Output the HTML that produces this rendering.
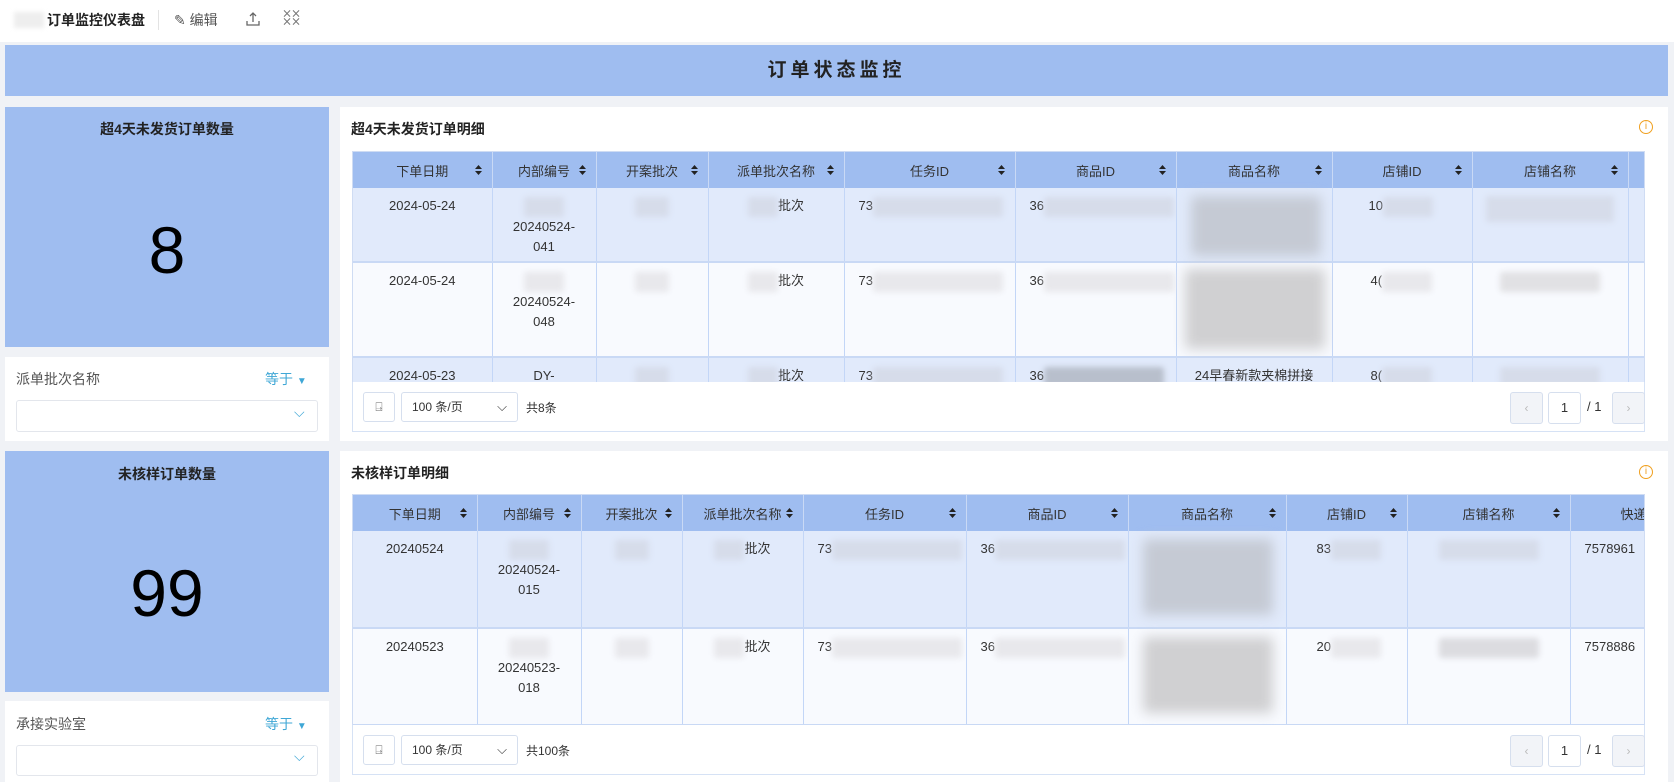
<!DOCTYPE html>
<html><head><meta charset="utf-8"><style>
*{box-sizing:border-box;margin:0;padding:0}
body{width:1674px;height:782px;background:#f0f2f6;font-family:"Liberation Sans","Noto Sans CJK SC",sans-serif;color:#333;position:relative;overflow:hidden}
.a{position:absolute}
.top{left:0;top:0;width:1674px;height:42px;background:#fff}
.card{background:#9fbdf0}
.white{background:#fff}
.tbl{position:absolute;overflow:hidden;border:1px solid #cfdcf3;background:#fff}
table{border-collapse:collapse;table-layout:fixed;font-size:13px}
th{background:#9fbdf0;height:36px;font-weight:normal;color:#333;border-right:1px solid #c9d9f5;position:relative;text-align:center}
th svg{position:absolute;right:10px;top:13px}
td{border-right:1px solid #c3d6f7;border-bottom:2px solid #c9d9f5;vertical-align:top;padding-top:8px;text-align:center;line-height:20px;position:relative}
tr.o td{background:#e1eafb}
tr.e td{background:#f8fafe}
.bl{display:inline-block;height:20px;border-radius:3px;background:#d6dcea;filter:blur(3px);vertical-align:middle}
.img{position:absolute;border-radius:4px;background:#c5cad4;filter:blur(6px)}
.l{text-align:left;padding-left:14px}
.pg{border:1px solid #d6dfee;border-radius:3px;background:#fff;position:absolute;font-size:12px}
</style></head><body>
<div class="a top"></div>
<div class="a" style="left:14px;top:12px;width:30px;height:16px;background:#eee;filter:blur(2px)"></div>
<div class="a" style="left:47px;top:10px;font-size:14px;font-weight:bold;color:#222">订单监控仪表盘</div>
<div class="a" style="left:158px;top:10px;width:1px;height:20px;background:#e3e3e3"></div>
<div class="a" style="left:174px;top:10px;font-size:14px;color:#555">✎ 编辑</div>
<svg class="a" style="left:245px;top:11px" width="16" height="16" viewBox="0 0 16 16"><path d="M8 11V2M5 5l3-3 3 3M2 10v4h12v-4" fill="none" stroke="#666" stroke-width="1.3"/></svg>
<div class="a" style="left:282px;top:9px;font-size:12px;color:#777;line-height:8px;letter-spacing:-1px">⨯⨯<br>⨯⨯</div>
<div class="a card" style="left:5px;top:45px;width:1663px;height:51px;text-align:center;line-height:51px;font-size:19px;font-weight:bold;letter-spacing:4px;color:#222">订单状态监控</div>

<div class="a card" style="left:5px;top:107px;width:324px;height:240px"></div>
<div class="a" style="left:5px;top:119px;width:324px;text-align:center;font-size:14px;font-weight:bold;color:#222">超4天未发货订单数量</div>
<div class="a" style="left:5px;top:212px;width:324px;text-align:center;font-size:66px;color:#000">8</div>
<div class="a white" style="left:5px;top:357px;width:324px;height:84px"></div>
<div class="a" style="left:16px;top:369px;font-size:14px;color:#555">派单批次名称</div>
<div class="a" style="left:265px;top:369px;font-size:14px;color:#3fa7d6">等于 <span style="font-size:10px">▼</span></div>
<div class="a" style="left:16px;top:400px;width:302px;height:32px;border:1px solid #e3e6ec;border-radius:3px"></div>
<div class="a" style="left:294px;top:404px;font-size:14px;color:#3fa7d6">⌵</div>

<div class="a card" style="left:5px;top:451px;width:324px;height:241px"></div>
<div class="a" style="left:5px;top:464px;width:324px;text-align:center;font-size:14px;font-weight:bold;color:#222">未核样订单数量</div>
<div class="a" style="left:5px;top:555px;width:324px;text-align:center;font-size:66px;color:#000">99</div>
<div class="a white" style="left:5px;top:701px;width:324px;height:81px"></div>
<div class="a" style="left:16px;top:714px;font-size:14px;color:#555">承接实验室</div>
<div class="a" style="left:265px;top:714px;font-size:14px;color:#3fa7d6">等于 <span style="font-size:10px">▼</span></div>
<div class="a" style="left:16px;top:745px;width:302px;height:31px;border:1px solid #e3e6ec;border-radius:3px"></div>
<div class="a" style="left:294px;top:748px;font-size:14px;color:#3fa7d6">⌵</div>

<div class="a white" style="left:340px;top:107px;width:1328px;height:334px"></div>
<div class="a" style="left:351px;top:119px;font-size:14px;font-weight:bold;color:#222">超4天未发货订单明细</div>
<div class="a" style="left:1639px;top:120px;width:14px;height:14px;border:1.3px solid #f0a020;border-radius:50%;color:#f0a020;font-size:10px;line-height:12px;text-align:center">i</div>
<div class="tbl" style="left:352px;top:151px;width:1293px;height:232px">
<table style="width:1292px"><colgroup><col width="139"><col width="104"><col width="112"><col width="136"><col width="171"><col width="161"><col width="156"><col width="140"><col width="156"><col width="17"></colgroup>
<tr><th>下单日期<svg width="7" height="10"><path d="M0 4L3.5 0 7 4ZM0 6l3.5 4L7 6Z" fill="#222"/></svg></th><th>内部编号<svg width="7" height="10"><path d="M0 4L3.5 0 7 4ZM0 6l3.5 4L7 6Z" fill="#222"/></svg></th><th>开案批次<svg width="7" height="10"><path d="M0 4L3.5 0 7 4ZM0 6l3.5 4L7 6Z" fill="#222"/></svg></th><th>派单批次名称<svg width="7" height="10"><path d="M0 4L3.5 0 7 4ZM0 6l3.5 4L7 6Z" fill="#222"/></svg></th><th>任务ID<svg width="7" height="10"><path d="M0 4L3.5 0 7 4ZM0 6l3.5 4L7 6Z" fill="#222"/></svg></th><th>商品ID<svg width="7" height="10"><path d="M0 4L3.5 0 7 4ZM0 6l3.5 4L7 6Z" fill="#222"/></svg></th><th>商品名称<svg width="7" height="10"><path d="M0 4L3.5 0 7 4ZM0 6l3.5 4L7 6Z" fill="#222"/></svg></th><th>店铺ID<svg width="7" height="10"><path d="M0 4L3.5 0 7 4ZM0 6l3.5 4L7 6Z" fill="#222"/></svg></th><th>店铺名称<svg width="7" height="10"><path d="M0 4L3.5 0 7 4ZM0 6l3.5 4L7 6Z" fill="#222"/></svg></th><th></th></tr>
<tr class="o" style="height:74px"><td>2024-05-24</td><td><span class="bl" style="width:40px"></span><br>20240524-<br>041</td><td><span class="bl" style="width:34px"></span></td><td><span class="bl" style="width:30px"></span>批次</td><td class="l">73<span class="bl" style="width:130px"></span></td><td class="l">36<span class="bl" style="width:130px"></span></td><td><div class="img" style="left:14px;top:8px;width:130px;height:60px"></div></td><td class="l" style="padding-left:36px">10<span class="bl" style="width:50px"></span></td><td><span class="bl" style="width:128px;height:26px"></span></td><td></td></tr>
<tr class="e" style="height:95px"><td>2024-05-24</td><td><span class="bl" style="width:40px;background:#e8e8ec"></span><br>20240524-<br>048</td><td><span class="bl" style="width:34px;background:#e8e8ec"></span></td><td><span class="bl" style="width:30px;background:#e8e8ec"></span>批次</td><td class="l">73<span class="bl" style="width:130px;background:#e8e8ec"></span></td><td class="l">36<span class="bl" style="width:130px;background:#e8e8ec"></span></td><td><div class="img" style="left:8px;top:6px;width:140px;height:80px;background:#d0d0d2"></div></td><td class="l" style="padding-left:38px">4(<span class="bl" style="width:50px;background:#e8e8ec"></span></td><td><span class="bl" style="width:100px;background:#e1e1e4"></span></td><td></td></tr>
<tr class="o" style="height:40px"><td>2024-05-23</td><td>DY-</td><td><span class="bl" style="width:34px"></span></td><td><span class="bl" style="width:30px"></span>批次</td><td class="l">73<span class="bl" style="width:130px"></span></td><td class="l">36<span class="bl" style="width:120px;background:#b8bfcc"></span></td><td>24早春新款夹棉拼接</td><td class="l" style="padding-left:38px">8(<span class="bl" style="width:50px"></span></td><td><span class="bl" style="width:100px"></span></td><td></td></tr>
</table></div>
<div class="a" style="left:352px;top:382px;width:1293px;height:50px;border:1px solid #d6e2f5;border-top:none;background:#fff"></div>
<div class="pg" style="left:363px;top:392px;width:32px;height:30px;text-align:center;line-height:28px;color:#666">⍈</div>
<div class="pg" style="left:401px;top:392px;width:117px;height:30px;line-height:28px;padding-left:10px">100 条/页<span style="position:absolute;right:10px;font-size:13px">⌵</span></div>
<div class="a" style="left:526px;top:399px;font-size:12px">共8条</div>
<div class="pg" style="left:1510px;top:392px;width:33px;height:32px;background:#f2f4f8;text-align:center;line-height:30px;color:#bbb">‹</div>
<div class="pg" style="left:1548px;top:392px;width:33px;height:32px;text-align:center;line-height:30px;font-size:13px">1</div>
<div class="a" style="left:1587px;top:399px;font-size:13px">/ 1</div>
<div class="pg" style="left:1612px;top:392px;width:33px;height:32px;background:#f2f4f8;text-align:center;line-height:30px;color:#bbb">›</div>

<div class="a white" style="left:340px;top:451px;width:1328px;height:331px"></div>
<div class="a" style="left:351px;top:463px;font-size:14px;font-weight:bold;color:#222">未核样订单明细</div>
<div class="a" style="left:1639px;top:465px;width:14px;height:14px;border:1.3px solid #f0a020;border-radius:50%;color:#f0a020;font-size:10px;line-height:12px;text-align:center">i</div>
<div class="tbl" style="left:352px;top:494px;width:1293px;height:232px">
<table style="width:1400px"><colgroup><col width="124"><col width="104"><col width="101"><col width="121"><col width="163"><col width="162"><col width="158"><col width="121"><col width="163"><col width="183"></colgroup>
<tr><th>下单日期<svg width="7" height="10"><path d="M0 4L3.5 0 7 4ZM0 6l3.5 4L7 6Z" fill="#222"/></svg></th><th>内部编号<svg width="7" height="10"><path d="M0 4L3.5 0 7 4ZM0 6l3.5 4L7 6Z" fill="#222"/></svg></th><th>开案批次<svg width="7" height="10"><path d="M0 4L3.5 0 7 4ZM0 6l3.5 4L7 6Z" fill="#222"/></svg></th><th>派单批次名称<svg width="7" height="10"><path d="M0 4L3.5 0 7 4ZM0 6l3.5 4L7 6Z" fill="#222"/></svg></th><th>任务ID<svg width="7" height="10"><path d="M0 4L3.5 0 7 4ZM0 6l3.5 4L7 6Z" fill="#222"/></svg></th><th>商品ID<svg width="7" height="10"><path d="M0 4L3.5 0 7 4ZM0 6l3.5 4L7 6Z" fill="#222"/></svg></th><th>商品名称<svg width="7" height="10"><path d="M0 4L3.5 0 7 4ZM0 6l3.5 4L7 6Z" fill="#222"/></svg></th><th>店铺ID<svg width="7" height="10"><path d="M0 4L3.5 0 7 4ZM0 6l3.5 4L7 6Z" fill="#222"/></svg></th><th>店铺名称<svg width="7" height="10"><path d="M0 4L3.5 0 7 4ZM0 6l3.5 4L7 6Z" fill="#222"/></svg></th><th style="text-align:left;padding-left:50px">快递单号</th></tr>
<tr class="o" style="height:97px"><td>20240524</td><td><span class="bl" style="width:40px"></span><br>20240524-<br>015</td><td><span class="bl" style="width:34px"></span></td><td><span class="bl" style="width:30px"></span>批次</td><td class="l">73<span class="bl" style="width:130px"></span></td><td class="l">36<span class="bl" style="width:130px"></span></td><td><div class="img" style="left:14px;top:8px;width:130px;height:76px"></div></td><td class="l" style="padding-left:30px">83<span class="bl" style="width:50px"></span></td><td><span class="bl" style="width:100px"></span></td><td class="l">7578961</td></tr>
<tr class="e" style="height:97px"><td>20240523</td><td><span class="bl" style="width:40px;background:#e8e8ec"></span><br>20240523-<br>018</td><td><span class="bl" style="width:34px;background:#e8e8ec"></span></td><td><span class="bl" style="width:30px;background:#e8e8ec"></span>批次</td><td class="l">73<span class="bl" style="width:130px;background:#e8e8ec"></span></td><td class="l">36<span class="bl" style="width:130px;background:#e8e8ec"></span></td><td><div class="img" style="left:14px;top:8px;width:130px;height:76px;background:#d0d0d2"></div></td><td class="l" style="padding-left:30px">20<span class="bl" style="width:50px;background:#e8e8ec"></span></td><td><span class="bl" style="width:100px;background:#dcdce0"></span></td><td class="l">7578886</td></tr>
<tr class="o" style="height:40px"><td></td><td></td><td></td><td></td><td></td><td></td><td></td><td></td><td></td><td></td></tr>
</table></div>
<div class="a" style="left:352px;top:725px;width:1293px;height:50px;border:1px solid #d6e2f5;border-top:none;background:#fff"></div>
<div class="pg" style="left:363px;top:735px;width:32px;height:30px;text-align:center;line-height:28px;color:#666">⍈</div>
<div class="pg" style="left:401px;top:735px;width:117px;height:30px;line-height:28px;padding-left:10px">100 条/页<span style="position:absolute;right:10px;font-size:13px">⌵</span></div>
<div class="a" style="left:526px;top:742px;font-size:12px">共100条</div>
<div class="pg" style="left:1510px;top:735px;width:33px;height:32px;background:#f2f4f8;text-align:center;line-height:30px;color:#bbb">‹</div>
<div class="pg" style="left:1548px;top:735px;width:33px;height:32px;text-align:center;line-height:30px;font-size:13px">1</div>
<div class="a" style="left:1587px;top:742px;font-size:13px">/ 1</div>
<div class="pg" style="left:1612px;top:735px;width:33px;height:32px;background:#f2f4f8;text-align:center;line-height:30px;color:#bbb">›</div>
</body></html>
